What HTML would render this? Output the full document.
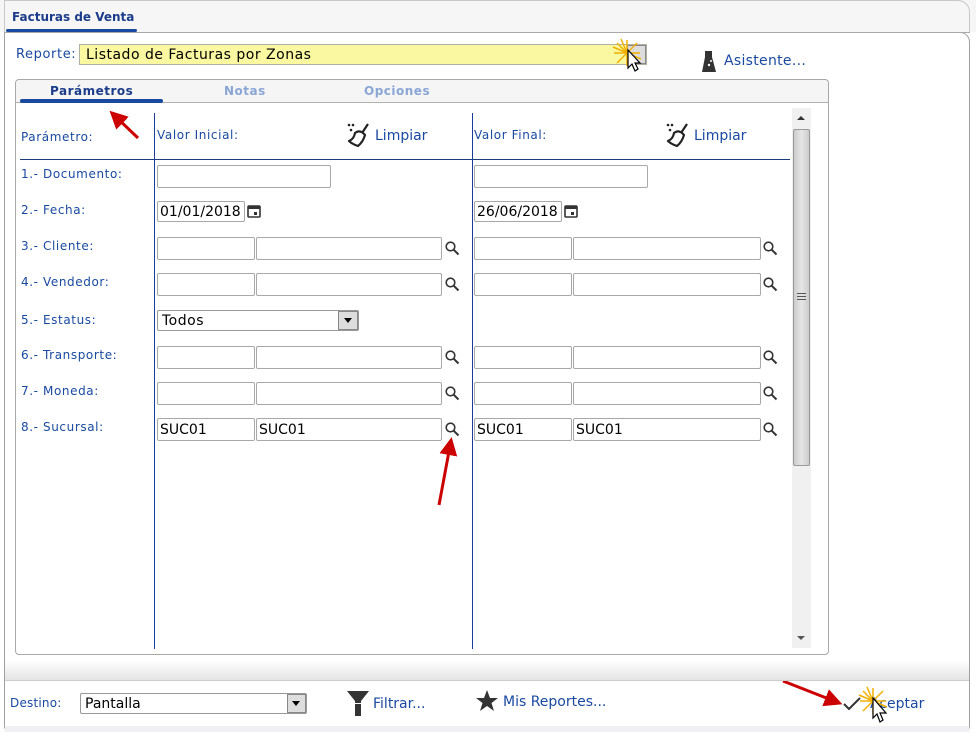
<!DOCTYPE html>
<html><head><meta charset="utf-8"><style>
*{box-sizing:border-box;margin:0;padding:0}
body{width:976px;height:734px;background:#fff;position:relative;overflow:hidden;font-family:"DejaVu Sans","Liberation Sans",sans-serif;font-size:12px;color:#1a4aa0}
.a{position:absolute}
.lbl{position:absolute;font-size:12px;color:#1a4aa0;letter-spacing:.6px;white-space:nowrap}
.in{position:absolute;height:23px;border:1px solid #a8a8a8;border-radius:2px;background:#fff;font-size:14px;color:#000;padding:3px 2px 0;white-space:nowrap;overflow:hidden;font-family:"DejaVu Sans",sans-serif}
.vl{position:absolute;width:1px;background:#1a3c9a}
svg{position:absolute;overflow:visible}
</style></head><body>
<div class="a" style="left:0;top:0;width:976px;height:32px;background:#f6f6f6"></div>
<div class="a" style="left:4px;top:32px;width:966px;height:700px;border:1px solid #a0a0a0;border-top:1px solid #a8a8a8;border-radius:0 10px 6px 6px;background:#fff"></div>
<div class="a" style="left:4px;top:0;width:966px;height:33px;border:1px solid #c8c8c8;border-bottom:none;border-radius:0 12px 0 0;background:#f6f6f6"></div>
<div class="a" style="left:12px;top:10px;font-weight:bold;font-size:12px;color:#1a3c8a">Facturas de Venta</div>
<div class="a" style="left:6px;top:29px;width:131px;height:3px;background:#1a4aa0;border-radius:2px"></div>
<div class="a" style="left:4px;top:32px;width:966px;height:1px;background:#a8a8a8"></div>

<div class="lbl" style="left:16px;top:47px;font-size:13px">Reporte:</div>
<div class="a" style="left:79px;top:44px;width:568px;height:21px;background:#faf8a0;border:1px solid #b0b0a0;font-size:14px;color:#000;padding:2px 6px 0;letter-spacing:.5px">Listado de Facturas por Zonas</div>
<div class="a" style="left:627px;top:45px;width:19px;height:19px;background:#ddd;border:1px solid #888"></div>
<svg style="left:612px;top:38px" width="40" height="42" viewBox="0 0 40 42"><g stroke="#f0b000" stroke-width="1.5"><line x1="15" y1="2" x2="15" y2="28"/><line x1="2" y1="15" x2="28" y2="15"/><line x1="5" y1="5" x2="25" y2="25"/><line x1="25" y1="5" x2="5" y2="25"/><line x1="9" y1="1" x2="21" y2="29"/><line x1="1" y1="9" x2="29" y2="21"/></g><path d="M16 12 L16 30 L20 26 L23 33 L26 31 L23 25 L28 25 Z" fill="#fff" stroke="#000" stroke-width="1.2"/></svg>
<svg style="left:701px;top:51px" width="16" height="22" viewBox="0 0 16 22"><path d="M4 0 L11 0 L11 6 L15 21 L1 21 L4 6 Z" fill="#333"/><circle cx="8" cy="14" r="1.2" fill="#fff"/><circle cx="10" cy="10" r="1" fill="#fff"/></svg>
<div class="lbl" style="left:724px;top:53px;font-size:14px;letter-spacing:.3px">Asistente...</div>

<div class="a" style="left:15px;top:79px;width:814px;height:576px;border:1px solid #a8a8a8;border-radius:4px;background:#fff"></div>
<div class="a" style="left:16px;top:80px;width:812px;height:23px;background:#f5f5f5;border-bottom:1px solid #b0b0b0;border-radius:4px 4px 0 0"></div>
<div class="a" style="left:50px;top:84px;font-weight:bold;color:#1a3c8a;letter-spacing:.5px">Parámetros</div>
<div class="a" style="left:224px;top:84px;font-weight:bold;color:#8aa6d6;letter-spacing:.5px">Notas</div>
<div class="a" style="left:364px;top:84px;font-weight:bold;color:#8aa6d6;letter-spacing:.5px">Opciones</div>
<div class="a" style="left:20px;top:99px;width:143px;height:4px;background:#1a4aa0;border-radius:2px"></div>

<div class="lbl" style="left:21px;top:130px">Parámetro:</div>
<div class="lbl" style="left:157px;top:128px">Valor Inicial:</div>
<div class="lbl" style="left:474px;top:128px">Valor Final:</div>
<svg style="left:346px;top:122px" width="26" height="26" viewBox="0 0 26 26"><circle cx="3" cy="3" r="1.3" fill="#222"/><circle cx="7" cy="3" r="1.3" fill="#222"/><circle cx="5" cy="8" r="1.3" fill="#222"/><path d="M22 2 L16 11 M9 11 Q14 7 19 13 Q17 20 12 24 Q6 22 3 19 Q8 17 9 11 Z" stroke="#222" stroke-width="2.2" fill="none" stroke-linejoin="round"/></svg>
<div class="lbl" style="left:375px;top:128px;font-size:14px;letter-spacing:0">Limpiar</div>
<svg style="left:665px;top:122px" width="26" height="26" viewBox="0 0 26 26"><circle cx="3" cy="3" r="1.3" fill="#222"/><circle cx="7" cy="3" r="1.3" fill="#222"/><circle cx="5" cy="8" r="1.3" fill="#222"/><path d="M22 2 L16 11 M9 11 Q14 7 19 13 Q17 20 12 24 Q6 22 3 19 Q8 17 9 11 Z" stroke="#222" stroke-width="2.2" fill="none" stroke-linejoin="round"/></svg>
<div class="lbl" style="left:694px;top:128px;font-size:14px;letter-spacing:0">Limpiar</div>
<div class="a" style="left:20px;top:159px;width:770px;height:1px;background:#1a3c7a"></div>
<div class="vl" style="left:154px;top:113px;height:536px"></div>
<div class="vl" style="left:472px;top:113px;height:536px"></div>

<div class="a" style="left:792px;top:108px;width:19px;height:540px;background:#f0f0f0"></div>
<div class="a" style="left:797px;top:116px;width:0;height:0;border-left:4px solid transparent;border-right:4px solid transparent;border-bottom:4px solid #333"></div>
<div class="a" style="left:797px;top:636px;width:0;height:0;border-left:4px solid transparent;border-right:4px solid transparent;border-top:4px solid #555"></div>
<div class="a" style="left:793px;top:129px;width:17px;height:337px;background:linear-gradient(90deg,#ccc,#e6e6e6 50%,#ccc);border:1px solid #999;border-radius:2px"></div>
<div class="a" style="left:797px;top:293px;width:9px;height:7px;border-top:1px solid #555;border-bottom:1px solid #555"></div>
<div class="a" style="left:797px;top:296px;width:9px;height:1px;background:#555"></div>

<div class="lbl" style="left:21px;top:167px">1.- Documento:</div>
<div class="lbl" style="left:21px;top:203px">2.- Fecha:</div>
<div class="lbl" style="left:21px;top:239px">3.- Cliente:</div>
<div class="lbl" style="left:21px;top:275px">4.- Vendedor:</div>
<div class="lbl" style="left:21px;top:313px">5.- Estatus:</div>
<div class="lbl" style="left:21px;top:348px">6.- Transporte:</div>
<div class="lbl" style="left:21px;top:384px">7.- Moneda:</div>
<div class="lbl" style="left:21px;top:420px">8.- Sucursal:</div>

<div class="in" style="left:157px;top:165px;width:174px"></div>
<div class="in" style="left:474px;top:165px;width:174px"></div>
<div class="in" style="left:157px;top:201px;width:88px;height:21px;padding:2px 2px 0">01/01/2018</div>
<div class="in" style="left:474px;top:201px;width:88px;height:21px;padding:2px 2px 0">26/06/2018</div>
<svg style="left:247px;top:204px" width="14" height="14" viewBox="0 0 14 14"><rect x="1" y="2" width="12" height="11" rx="1" fill="none" stroke="#333" stroke-width="1.6"/><rect x="1" y="2" width="12" height="3" fill="#333"/><rect x="7" y="8" width="3" height="3" fill="#333"/></svg>
<svg style="left:564px;top:204px" width="14" height="14" viewBox="0 0 14 14"><rect x="1" y="2" width="12" height="11" rx="1" fill="none" stroke="#333" stroke-width="1.6"/><rect x="1" y="2" width="12" height="3" fill="#333"/><rect x="7" y="8" width="3" height="3" fill="#333"/></svg>

<div class="a" style="left:157px;top:310px;width:202px;height:21px;border:1px solid #999;border-radius:2px;font-size:14px;color:#000;padding:2px 4px 0;letter-spacing:.5px">Todos</div>
<div class="a" style="left:338px;top:311px;width:20px;height:19px;background:#ddd;border:1px solid #888"></div>
<div class="a" style="left:344px;top:318px;border-left:4px solid transparent;border-right:4px solid transparent;border-top:5px solid #000"></div>

<div id="rows"></div>
<script>
var ys=[237,273,346,382,418],h='';
ys.forEach(function(y,i){var v=i==4?'SUC01':'';
[[157,98,256,186,445],[474,98,573,188,763]].forEach(function(c){
h+='<div class="in" style="left:'+c[0]+'px;top:'+y+'px;width:'+c[1]+'px">'+v+'</div>';
h+='<div class="in" style="left:'+c[2]+'px;top:'+y+'px;width:'+c[3]+'px">'+v+'</div>';
h+='<svg style="left:'+c[4]+'px;top:'+(y+4)+'px" width="15" height="15" viewBox="0 0 15 15"><circle cx="5.5" cy="5.5" r="4.3" fill="none" stroke="#333" stroke-width="1.6"/><line x1="8.8" y1="8.8" x2="13.5" y2="13.5" stroke="#333" stroke-width="2"/></svg>';});});
document.getElementById('rows').outerHTML=h;
</script>

<svg style="left:0;top:0" width="976" height="734"><defs><marker id="m" markerWidth="6" markerHeight="6" refX="3" refY="3" orient="auto"><path d="M0 0 L6 3 L0 6 Z" fill="#c00"/></marker></defs>
<line x1="138" y1="138" x2="116" y2="117" stroke="#c00" stroke-width="3" marker-end="url(#m)"/>
<line x1="439" y1="505" x2="450" y2="446" stroke="#c00" stroke-width="3" marker-end="url(#m)"/>
<line x1="783" y1="681" x2="834" y2="701" stroke="#c00" stroke-width="3" marker-end="url(#m)"/>
</svg>

<div class="a" style="left:5px;top:660px;width:964px;height:20px;background:linear-gradient(#fff,#e4e4e4)"></div>
<div class="a" style="left:5px;top:680px;width:964px;height:1px;background:#ccc"></div>
<div class="a" style="left:5px;top:726px;width:964px;height:6px;background:#eef0f4"></div>
<div class="lbl" style="left:10px;top:696px;letter-spacing:.2px">Destino:</div>
<div class="a" style="left:80px;top:693px;width:227px;height:21px;border:1px solid #999;border-radius:2px;font-size:14px;color:#000;padding:2px 4px 0">Pantalla</div>
<div class="a" style="left:287px;top:694px;width:19px;height:19px;background:#ddd;border:1px solid #888"></div>
<div class="a" style="left:292px;top:701px;border-left:4px solid transparent;border-right:4px solid transparent;border-top:5px solid #000"></div>
<svg style="left:347px;top:691px" width="22" height="26" viewBox="0 0 22 26"><path d="M0 0 L22 0 L14 10 L14 12 L8 12 L8 10 Z" fill="#333"/><rect x="8" y="13" width="6" height="12" fill="#333"/></svg>
<div class="lbl" style="left:373px;top:696px;font-size:14px;letter-spacing:0">Filtrar...</div>
<svg style="left:476px;top:690px" width="22" height="22" viewBox="0 0 22 22"><path d="M11 0 L14 8 L22 8 L15.5 13 L18 21 L11 16 L4 21 L6.5 13 L0 8 L8 8 Z" fill="#333"/></svg>
<div class="lbl" style="left:503px;top:694px;font-size:14px;letter-spacing:0">Mis Reportes...</div>
<svg style="left:843px;top:697px" width="18" height="14" viewBox="0 0 18 14"><path d="M1 7 L6 12 L17 1" stroke="#333" stroke-width="2" fill="none"/></svg>
<div class="lbl" style="left:870px;top:696px;font-size:14px;letter-spacing:0">Aceptar</div>
<svg style="left:858px;top:686px" width="40" height="44" viewBox="0 0 40 44"><g stroke="#f0b000" stroke-width="1.5"><line x1="15" y1="2" x2="15" y2="28"/><line x1="2" y1="15" x2="28" y2="15"/><line x1="5" y1="5" x2="25" y2="25"/><line x1="25" y1="5" x2="5" y2="25"/><line x1="9" y1="1" x2="21" y2="29"/><line x1="1" y1="9" x2="29" y2="21"/></g><path d="M15 12 L15 32 L19 28 L22 36 L25 34 L22 27 L28 27 Z" fill="#fff" stroke="#000" stroke-width="1.2"/></svg>
</body></html>
